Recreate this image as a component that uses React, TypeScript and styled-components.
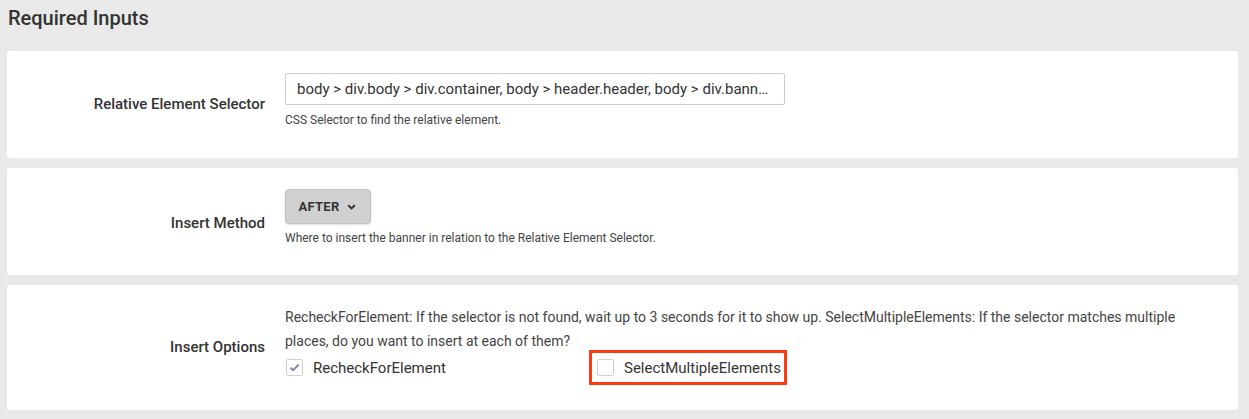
import React from "react";
import styled, { createGlobalStyle } from "styled-components";

const Global = createGlobalStyle`
  html, body { margin: 0; padding: 0; background: #e9e9e9; }
  body { font-family: Roboto, "Liberation Sans", sans-serif; color: #333; }
`;

const Page = styled.div`
  padding: 0 11px 9px 7px;
  display: flex;
  flex-direction: column;
`;

const Title = styled.h2`
  margin: 0;
  padding: 6px 0 0 1px;
  height: 51px;
  box-sizing: border-box;
  font-size: 20px;
  line-height: 24px;
  font-weight: 500;
  color: #333;
`;

const Cards = styled.div`
  display: flex;
  flex-direction: column;
  gap: 10px;
`;

const Card = styled.div<{ $h: number; $pt: number; $pb: number }>`
  background: #fff;
  border-radius: 3px;
  height: ${(p) => p.$h}px;
  box-sizing: border-box;
  padding: ${(p) => p.$pt}px 20px ${(p) => p.$pb}px 0;
  display: grid;
  grid-template-columns: 258px 1fr;
  column-gap: 20px;
  align-items: start;
`;

const Label = styled.div`
  font-size: 15px;
  font-weight: 500;
  color: #333;
  text-align: right;
  align-self: center;
`;

const Field = styled.div`
  display: flex;
  flex-direction: column;
  align-items: flex-start;
`;

const Input = styled.div`
  width: 500px;
  height: 32px;
  box-sizing: border-box;
  border: 1px solid #ccc;
  border-radius: 2px;
  padding: 0 11px;
  font-size: 15px;
  line-height: 30px;
  color: #333;
  white-space: nowrap;
  overflow: hidden;
  text-overflow: ellipsis;
`;

const Help = styled.div<{ $mt: number }>`
  margin-top: ${(p) => p.$mt}px;
  font-size: 12px;
  line-height: 16px;
  color: #444;
`;

const SelectButton = styled.button`
  display: inline-flex;
  align-items: center;
  gap: 7px;
  height: 35px;
  width: 86px;
  justify-content: center;
  box-sizing: border-box;
  padding: 0 12px 0 10px;
  background: #d0d0d0;
  border: 1px solid #c2c2c2;
  border-radius: 4px;
  box-shadow: 0 1px 2px rgba(0, 0, 0, 0.12);
  font-family: Roboto, "Liberation Sans", sans-serif;
  font-size: 13px;
  font-weight: 700;
  letter-spacing: 0.3px;
  color: #333;
`;

const Desc = styled.div`
  font-size: 14px;
  line-height: 24px;
  color: #444;
  max-width: 900px;
`;

const Options = styled.div`
  display: grid;
  grid-template-columns: 304px auto;
  align-items: center;
  margin-top: -3px;
`;

const Option = styled.label<{ $marked?: boolean }>`
  display: inline-flex;
  align-items: center;
  gap: 10px;
  justify-self: start;
  font-size: 15px;
  color: #333;
  box-sizing: border-box;
  padding: ${(p) => (p.$marked ? "0 3px 0 5px" : "0 0 0 1px")};
  border: ${(p) => (p.$marked ? "3px solid #ff3a12" : "none")};
  height: ${(p) => (p.$marked ? "35px" : "28px")};
`;

const Box = styled.span`
  width: 17px;
  height: 17px;
  box-sizing: border-box;
  border: 1px solid #cfcfcf;
  border-radius: 2px;
  background: #fff;
  display: inline-flex;
  align-items: center;
  justify-content: center;
`;

const Check = ({ checked }: { checked?: boolean }) => (
  <Box>
    {checked && (
      <svg width="11" height="9" viewBox="0 0 11 9">
        <path d="M1.5 4.8 L4.2 7.2 L9.6 1.6" fill="none" stroke="#8a7cb8" strokeWidth="2" />
      </svg>
    )}
  </Box>
);

const Chevron = () => (
  <svg width="9" height="6" viewBox="0 0 9 6">
    <path d="M1.2 1.2 L4.5 4.4 L7.8 1.2" fill="none" stroke="#333" strokeWidth="2" />
  </svg>
);

export default function App() {
  return (
    <>
      <Global />
      <Page>
        <Title>Required Inputs</Title>
        <Cards>
          <Card $h={107} $pt={22} $pb={23}>
            <Label>Relative Element Selector</Label>
            <Field>
              <Input>
                body &gt; div.body &gt; div.container, body &gt; header.header, body &gt; div.banner-wrapper
              </Input>
              <Help $mt={7}>CSS Selector to find the relative element.</Help>
            </Field>
          </Card>
          <Card $h={107} $pt={21} $pb={19}>
            <Label>Insert Method</Label>
            <Field>
              <SelectButton>
                AFTER <Chevron />
              </SelectButton>
              <Help $mt={6}>Where to insert the banner in relation to the Relative Element Selector.</Help>
            </Field>
          </Card>
          <Card $h={125} $pt={20} $pb={21}>
            <Label>Insert Options</Label>
            <Field>
              <Desc>
                RecheckForElement: If the selector is not found, wait up to 3 seconds for it to show up.
                SelectMultipleElements: If the selector matches multiple places, do you want to insert at
                each of them?
              </Desc>
              <Options>
                <Option>
                  <Check checked />
                  RecheckForElement
                </Option>
                <Option $marked>
                  <Check />
                  SelectMultipleElements
                </Option>
              </Options>
            </Field>
          </Card>
        </Cards>
      </Page>
    </>
  );
}
